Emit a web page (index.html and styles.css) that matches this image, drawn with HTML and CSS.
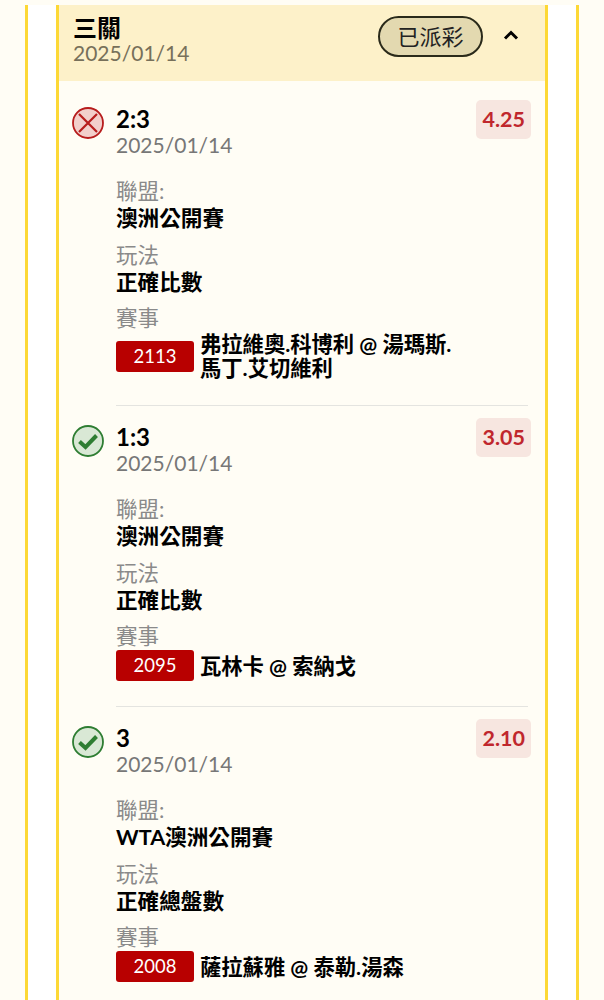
FILE: index.html
```html
<!DOCTYPE html>
<html lang="zh-Hant">
  <head>
    <meta charset="UTF-8" />
    <title>三關</title>
    <link rel="stylesheet" href="styles.css">
  </head>
  <body>
    <div class="outer">
      <div class="card">
        <div class="card-head">
          <div class="head-text">
            <div class="head-title">三關</div>
            <div class="date">2025/01/14</div>
          </div>
          <span class="pill">已派彩</span>
          <svg class="chevron" width="16" height="10" viewBox="0 0 16 10">
            <path d="M2 8.5 L8 2.5 L14 8.5" fill="none" stroke="#000" stroke-width="3" />
          </svg>
        </div>

        <div class="leg">
          <svg class="result" width="32" height="32" viewBox="0 0 32 32">
            <circle class="lost-fill" cx="16" cy="16" r="15" />
            <path d="M7 7 L25 25 M25 7 L7 25" fill="none" stroke="#b71c1c" stroke-width="2.2" />
          </svg>
          <div class="leg-body">
            <div class="leg-top">
              <div>
                <div class="pick">2:3</div>
                <div class="date leg-date">2025/01/14</div>
              </div>
              <span class="odds">4.25</span>
            </div>
            <div class="label">聯盟:</div>
            <div class="value">澳洲公開賽</div>
            <div class="label">玩法</div>
            <div class="value">正確比數</div>
            <div class="label">賽事</div>
            <div class="match">
              <span class="tag">2113</span>
              <span class="match-name">弗拉維奧.科博利 @ 湯瑪斯.馬丁.艾切維利</span>
            </div>
          </div>
        </div>

        <div class="leg">
          <svg class="result" width="32" height="32" viewBox="0 0 32 32">
            <circle class="won-fill" cx="16" cy="16" r="15" />
            <path d="M7.5 16.5 L13.5 22 L24.5 10.5" fill="none" stroke="#2e7d32" stroke-width="4" />
          </svg>
          <div class="leg-body">
            <div class="leg-top">
              <div>
                <div class="pick">1:3</div>
                <div class="date leg-date">2025/01/14</div>
              </div>
              <span class="odds">3.05</span>
            </div>
            <div class="label">聯盟:</div>
            <div class="value">澳洲公開賽</div>
            <div class="label">玩法</div>
            <div class="value">正確比數</div>
            <div class="label">賽事</div>
            <div class="match">
              <span class="tag">2095</span>
              <span class="match-name">瓦林卡 @ 索納戈</span>
            </div>
          </div>
        </div>

        <div class="leg">
          <svg class="result" width="32" height="32" viewBox="0 0 32 32">
            <circle class="won-fill" cx="16" cy="16" r="15" />
            <path d="M7.5 16.5 L13.5 22 L24.5 10.5" fill="none" stroke="#2e7d32" stroke-width="4" />
          </svg>
          <div class="leg-body">
            <div class="leg-top">
              <div>
                <div class="pick">3</div>
                <div class="date leg-date">2025/01/14</div>
              </div>
              <span class="odds">2.10</span>
            </div>
            <div class="label">聯盟:</div>
            <div class="value">WTA澳洲公開賽</div>
            <div class="label">玩法</div>
            <div class="value">正確總盤數</div>
            <div class="label">賽事</div>
            <div class="match">
              <span class="tag">2008</span>
              <span class="match-name">薩拉蘇雅 @ 泰勒.湯森</span>
            </div>
          </div>
        </div>
      </div>
    </div>
  </body>
</html>
```

FILE: styles.css
```css
html,
body {
  height: 1000px;
  overflow: hidden;
}
body {
  font-family: Lato, "Noto Sans CJK TC", sans-serif;
  margin: 0;
  padding-top: 5px;
  box-sizing: border-box;
  background: #fffdf5;
  color: #000;
}
.outer {
  width: 554px;
  box-sizing: border-box;
  margin-left: 25px;
  padding: 0 28px;
  height: 995px;
  background: #fff;
  border-left: 3px solid #fdd835;
  border-right: 3px solid #fdd835;
}
.card {
  height: 995px;
  background: #fffdf5;
  border-left: 3px solid #fdd835;
  border-right: 3px solid #fdd835;
}
.card-head {
  display: flex;
  align-items: flex-start;
  height: 76px;
  box-sizing: border-box;
  padding: 11px 14px 0;
  background: #fdf1c9;
}
.head-text {
  flex: 1;
}
.head-title {
  font-size: 24px;
  font-weight: 700;
  line-height: 24px;
}
.date {
  font-size: 21px;
  line-height: 26px;
  color: #77705a;
}
.pill {
  width: 105px;
  height: 41px;
  box-sizing: border-box;
  border: 2px solid #2a2a1a;
  border-radius: 21px;
  background: #e3d9b0;
  font-size: 22px;
  line-height: 37px;
  text-align: center;
  color: #222;
}
.chevron {
  margin: 14px 12px 0 20px;
}
.leg {
  display: flex;
  align-items: flex-start;
  padding: 12px 0 0 13px;
}
.leg:nth-child(2) {
  padding-top: 19px;
}
.result {
  flex: none;
  margin: 7px 12px 0 0;
}
.lost-fill {
  fill: #f2cfcb;
  stroke: #b71c1c;
  stroke-width: 1.8;
}
.won-fill {
  fill: #d9e8d5;
  stroke: #2e7d32;
  stroke-width: 1.8;
}
.leg-body {
  width: 412px;
  padding-bottom: 25px;
  border-bottom: 1px solid #e4e4e0;
}
.leg:last-child .leg-body {
  border-bottom: none;
}
.leg-top {
  display: flex;
  justify-content: space-between;
  align-items: flex-start;
  margin-bottom: 20px;
}
.pick {
  font-size: 24px;
  font-weight: 700;
  line-height: 26px;
  margin-top: 6px;
}
.leg-date {
  color: #777;
}
.odds {
  margin-right: -3px;
  padding: 0 6px;
  height: 39px;
  line-height: 39px;
  border-radius: 5px;
  background: #f7e6e0;
  color: #c0272d;
  font-size: 21.5px;
  font-weight: 700;
}
.label {
  font-size: 21.5px;
  line-height: 27px;
  color: #8a8a8a;
}
.value {
  font-size: 21.6px;
  font-weight: 700;
  line-height: 26px;
  margin-bottom: 10.5px;
}
.match {
  display: flex;
  align-items: center;
}
.tag {
  flex: none;
  width: 78px;
  height: 31px;
  margin-right: 6px;
  border-radius: 3px;
  background: #b80000;
  color: #fff;
  font-size: 18.5px;
  line-height: 31px;
  text-align: center;
}
.match-name {
  max-width: 265px;
  font-size: 21.3px;
  font-weight: 700;
  line-height: 24px;
}
```
